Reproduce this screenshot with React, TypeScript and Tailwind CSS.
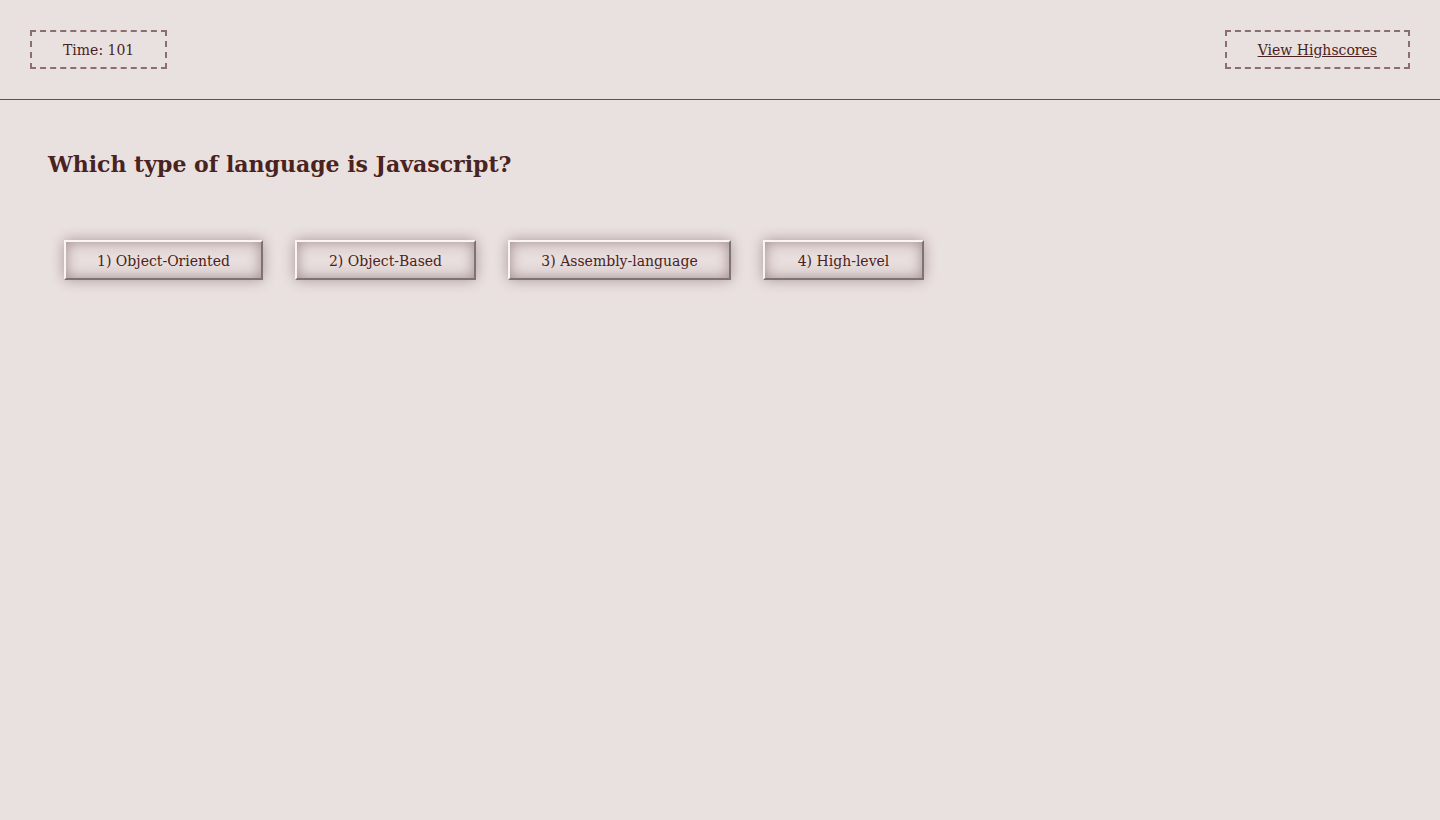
import React from "react";

const answers = [
    { label: "1) Object-Oriented", w: "w-[199px]" },
    { label: "2) Object-Based", w: "w-[181px]" },
    { label: "3) Assembly-language", w: "w-[223px]" },
    { label: "4) High-level", w: "w-[161px]" },
];

export default function App() {
    return (
        <div className="min-h-screen bg-[#e9e1e0] text-[#4a2320]" style={{ fontFamily: '"DejaVu Serif", Georgia, serif' }}>
            {/* Header */}
            <header className="flex items-center justify-between px-[30px] pt-[30px] pb-[30px] border-b border-[#555]">
                <div className="border-2 border-dashed border-[#8c6e6c] px-[31px] pt-[2px] h-[39px] flex items-center text-[14px]">
                    Time: 101
                </div>
                <div className="border-2 border-dashed border-[#8c6e6c] px-[31px] pt-[2px] h-[39px] flex items-center text-[14px]">
                    <a href="#" className="underline">View Highscores</a>
                </div>
            </header>

            {/* Question */}
            <main className="px-[48px] pt-[48px]">
                <h1 className="text-[22px] font-bold leading-[32px]">Which type of language is Javascript?</h1>
                <div className="flex gap-[32px] mt-[60px] ml-[16px]">
                    {answers.map((a) => (
                        <button
                            key={a.label}
                            className={`${a.w} h-[40px] pt-[2px] text-[14px] text-[#4a2320] bg-[#e8dede] border-2 border-t-[#f9f5f5] border-l-[#f9f5f5] border-b-[#7a7474] border-r-[#7a7474] shadow-[inset_0_0_14px_#a38b8b,0_0_14px_#ad9797]`}
                        >
                            {a.label}
                        </button>
                    ))}
                </div>
            </main>
        </div>
    );
}
